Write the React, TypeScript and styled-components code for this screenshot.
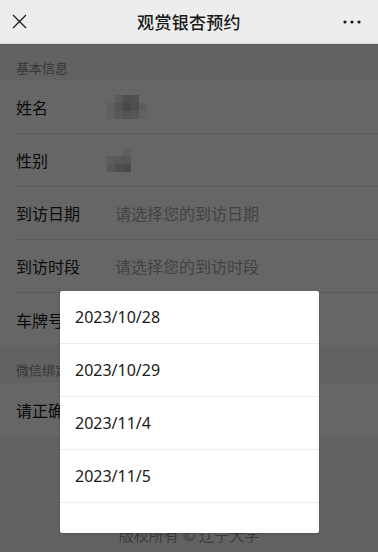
import React from "react";
import styled, { createGlobalStyle } from "styled-components";

const Global = createGlobalStyle`
  html, body { margin: 0; padding: 0; background: #f5f5f5; }
  body { font-family: "Noto Sans", "Noto Sans CJK SC", sans-serif; width: 378px; height: 552px; overflow: hidden; }
  * { box-sizing: border-box; }
`;

const Screen = styled.div`
  position: relative;
  width: 378px;
  height: 552px;
  overflow: hidden;
  background: #f5f5f5;
`;

const NavBar = styled.div`
  height: 44px;
  background: #ededed;
  display: grid;
  grid-template-columns: 60px 1fr 60px;
  align-items: center;
  border-bottom: 1px solid #d6d6d6;
  position: relative;
  z-index: 2;
`;

const NavTitle = styled.div`
  text-align: center;
  font-size: 17px;
  font-weight: 500;
  color: #191919;
  letter-spacing: 0.3px;
`;

const NavIcon = styled.div<{ $align: "start" | "end" }>`
  display: flex;
  justify-content: ${(p) => (p.$align === "start" ? "flex-start" : "flex-end")};
  padding: ${(p) => (p.$align === "start" ? "0 0 0 12px" : "0 17px 0 0")};
  align-items: center;
`;

const SectionTitle = styled.div`
  height: 37px;
  display: flex;
  align-items: flex-end;
  padding: 0 0 4px 16px;
  font-size: 13px;
  line-height: 18px;
  color: #888;
  background: #f5f5f5;
`;

const Group = styled.div`
  background: #fff;
`;

const Row = styled.div<{ $last?: boolean }>`
  height: 53px;
  display: flex;
  align-items: center;
  margin-left: 16px;
  border-bottom: ${(p) => (p.$last ? "none" : "1px solid #e5e5e5")};
`;

const Label = styled.div<{ $wide?: boolean }>`
  width: ${(p) => (p.$wide ? "auto" : "99px")};
  font-size: 16px;
  color: #191919;
  flex-shrink: 0;
`;

const Placeholder = styled.div`
  font-size: 16px;
  color: #a6a6a6;
`;

const Mosaic = styled.div<{ $cols: number }>`
  display: grid;
  grid-template-columns: repeat(${(p) => p.$cols}, 8px);
  grid-auto-rows: 8px;
  margin-left: -8px;
`;

const Cell = styled.div<{ $c: string }>`
  background: ${(p) => p.$c};
`;

const Footer = styled.div`
  text-align: center;
  padding-top: 88px;
  font-size: 15px;
  color: #999;
`;

const Mask = styled.div`
  position: absolute;
  left: 0;
  right: 0;
  top: 44px;
  bottom: 0;
  background: rgba(0, 0, 0, 0.6);
  z-index: 3;
`;

const Sheet = styled.div`
  position: absolute;
  left: 60px;
  top: 247px;
  width: 259px;
  height: 242px;
  background: #fff;
  border-radius: 2px;
  overflow: hidden;
  box-shadow: 0 1px 3px rgba(0, 0, 0, 0.2);
`;

const Option = styled.div`
  height: 53px;
  display: flex;
  align-items: center;
  padding-left: 15px;
  font-size: 16px;
  color: #1a1a1a;
  border-bottom: 1px solid #ececec;
`;

const nameCells = [
  "#fff", "#e2e2e2", "#c4c4c4", "#c9c9c9", "#fff", "#fff",
  "#eaeaea", "#d3d3d3", "#b5b5b5", "#c2c2c2", "#e8e8e8", "#fff",
  "#f3f3f3", "#dcdcdc", "#cfcfcf", "#d6d6d6", "#f4f4f4", "#fff",
];
const genderCells = [
  "#fff", "#fff", "#eaeaea", "#fff",
  "#e6e6e6", "#dedede", "#dadada", "#fff",
  "#dadada", "#c6c6c6", "#b7b7b7", "#fff",
];

export default function App() {
  return (
    <Screen>
      <Global />
      <NavBar>
        <NavIcon $align="start">
          <svg width="15" height="15" viewBox="0 0 15 15">
            <path d="M1 1 L14 14 M14 1 L1 14" stroke="#1a1a1a" strokeWidth="1.3" fill="none" />
          </svg>
        </NavIcon>
        <NavTitle>观赏银杏预约</NavTitle>
        <NavIcon $align="end">
          <svg width="18" height="4" viewBox="0 0 18 4">
            <circle cx="2" cy="2" r="1.6" fill="#1a1a1a" />
            <circle cx="9" cy="2" r="1.6" fill="#1a1a1a" />
            <circle cx="16" cy="2" r="1.6" fill="#1a1a1a" />
          </svg>
        </NavIcon>
      </NavBar>

      <SectionTitle>基本信息</SectionTitle>
      <Group>
        <Row>
          <Label>姓名</Label>
          <Mosaic $cols={6}>
            {nameCells.map((c, i) => (
              <Cell key={i} $c={c} />
            ))}
          </Mosaic>
        </Row>
        <Row>
          <Label>性别</Label>
          <Mosaic $cols={4}>
            {genderCells.map((c, i) => (
              <Cell key={i} $c={c} />
            ))}
          </Mosaic>
        </Row>
        <Row>
          <Label>到访日期</Label>
          <Placeholder>请选择您的到访日期</Placeholder>
        </Row>
        <Row>
          <Label>到访时段</Label>
          <Placeholder>请选择您的到访时段</Placeholder>
        </Row>
        <Row $last>
          <Label>车牌号</Label>
          <Placeholder>请输入车牌号</Placeholder>
        </Row>
      </Group>

      <SectionTitle>微信绑定手机号</SectionTitle>
      <Group>
        <Row $last>
          <Label $wide>请正确填写手机号</Label>
        </Row>
      </Group>

      <Footer>版权所有 © 辽宁大学</Footer>

      <Mask>
        <Sheet>
          <Option>2023/10/28</Option>
          <Option>2023/10/29</Option>
          <Option>2023/11/4</Option>
          <Option>2023/11/5</Option>
          <Option />
        </Sheet>
      </Mask>
    </Screen>
  );
}
